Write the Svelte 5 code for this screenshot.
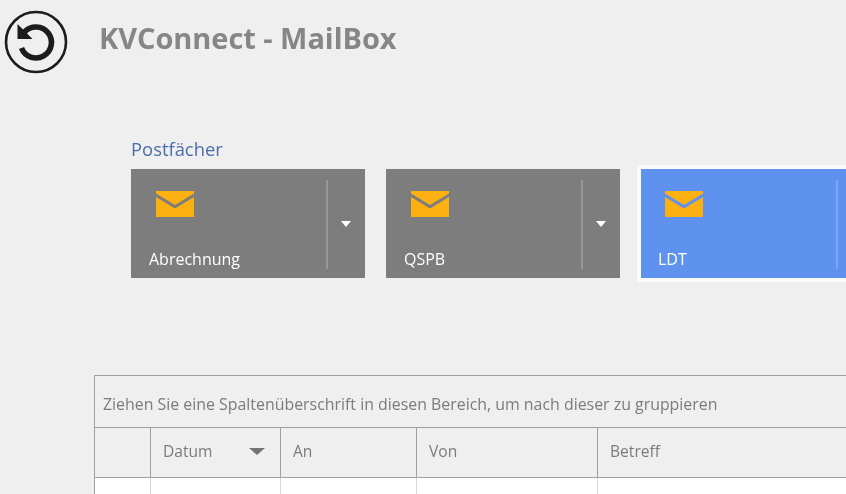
<script lang="ts">
  const boxes = [
    { name: "Abrechnung", active: false },
    { name: "QSPB", active: false },
    { name: "LDT", active: true },
  ];

  const columns = [
    { label: "", width: 56 },
    { label: "Datum", width: 130, sorted: true },
    { label: "An", width: 136 },
    { label: "Von", width: 181 },
    { label: "Betreff", width: 260 },
  ];
</script>

<div class="page">
  <header class="head">
    <button class="back" aria-label="Zurück">
      <svg width="64" height="64" viewBox="0 0 64 64" fill="none">
        <circle cx="32" cy="32" r="30" stroke="#1c1c1c" stroke-width="2.6" />
        <path d="M20.5 22 A15.5 15.5 0 1 1 17.5 38" stroke="#1c1c1c" stroke-width="5.6" />
        <path d="M13.5 14 L13.5 29 L28.5 29 Z" fill="#1c1c1c" />
      </svg>
    </button>
    <h1>KVConnect - MailBox</h1>
  </header>

  <section class="boxes">
    <div class="boxes-title">Postfächer</div>
    <div class="box-row">
      {#each boxes as box}
        <div class="box" class:active={box.active}>
          <div class="box-main">
            <svg class="mail" width="38" height="26" viewBox="0 0 38 26">
              <path d="M0 0 H38 V2.5 L19 14 L0 2.5 Z" fill="#fdb011" />
              <path d="M0 6 L19 17.5 L38 6 V26 H0 Z" fill="#fdb011" />
            </svg>
            <span class="box-name">{box.name}</span>
          </div>
          <div class="box-drop">
            <span class="arrow"></span>
          </div>
        </div>
      {/each}
    </div>
  </section>

  <section class="grid">
    <div class="group-panel">Ziehen Sie eine Spaltenüberschrift in diesen Bereich, um nach dieser zu gruppieren</div>
    <div class="row header">
      {#each columns as col}
        <div class="cell" style="width: {col.width}px">
          {col.label}
          {#if col.sorted}<span class="sort"></span>{/if}
        </div>
      {/each}
    </div>
    <div class="row body">
      {#each columns as col}
        <div class="cell" style="width: {col.width}px"></div>
      {/each}
    </div>
  </section>
</div>

<style>
  :global(body) {
    margin: 0;
    background: #efefef;
    overflow: hidden;
  }
  .page {
    width: 846px;
    height: 494px;
    overflow: hidden;
    font-family: "Open Sans", "Noto Sans", sans-serif;
    filter: blur(0.35px);
  }
  .head {
    display: flex;
    align-items: flex-start;
    padding: 10px 0 0 4px;
    height: 129px;
    box-sizing: border-box;
  }
  .back {
    all: unset;
    display: block;
    width: 64px;
    height: 64px;
  }
  h1 {
    margin: 8px 0 0 31px;
    font-size: 29px;
    line-height: 40px;
    font-weight: 700;
    color: #868686;
    letter-spacing: -0.05px;
  }
  .boxes {
    padding-left: 131px;
  }
  .boxes-title {
    font-size: 18.4px;
    line-height: 40px;
    height: 40px;
    color: #4a6ea9;
  }
  .box-row {
    display: flex;
    gap: 21px;
    width: 800px;
  }
  .box {
    flex: none;
    display: flex;
    width: 234px;
    height: 109px;
    background: #7d7d7d;
    color: #fff;
  }
  .box.active {
    background: #5f92ee;
    outline: 4px solid #fafafa;
  }
  .box-main {
    flex: 1;
    display: flex;
    flex-direction: column;
    justify-content: space-between;
    padding: 22px 0 8px 18px;
  }
  .active .box-main {
    padding-left: 17px;
  }
  .mail {
    margin-left: 7px;
  }
  .box-name {
    font-size: 16px;
    line-height: 22px;
  }
  .box-drop {
    flex: none;
    width: 39px;
    display: flex;
    align-items: center;
    justify-content: center;
    position: relative;
  }
  .box-drop::before {
    content: "";
    position: absolute;
    left: 0;
    top: 11px;
    bottom: 9px;
    width: 2px;
    background: rgba(255, 255, 255, 0.2);
  }
  .arrow {
    width: 0;
    height: 0;
    border-left: 5.5px solid transparent;
    border-right: 5.5px solid transparent;
    border-top: 6px solid #fff;
    margin-top: 1px;
  }
  .grid {
    margin: 97px 0 0 94px;
    border: 1px solid #a0a0a0;
    border-right: 0;
    width: 760px;
  }
  .group-panel {
    height: 52px;
    box-sizing: border-box;
    padding-left: 8px;
    line-height: 56px;
    font-size: 15.9px;
    color: #7b7b7b;
    white-space: nowrap;
    border-bottom: 1px solid #a0a0a0;
  }
  .row {
    display: flex;
  }
  .row.header {
    height: 49px;
    border-bottom: 1px solid #a0a0a0;
  }
  .row.body {
    height: 20px;
    background: #fff;
  }
  .cell {
    flex: none;
    box-sizing: border-box;
    display: flex;
    align-items: center;
    justify-content: space-between;
    padding: 0 15px 0 12px;
    border-right: 1px solid #a0a0a0;
    font-size: 15.6px;
    color: #7b7b7b;
  }
  .header .cell {
    padding-bottom: 3px;
  }
  .body .cell {
    border-right-color: #d8d8d8;
  }
  .sort {
    width: 0;
    height: 0;
    border-left: 8px solid transparent;
    border-right: 8px solid transparent;
    border-top: 7px solid #757575;
  }
</style>
